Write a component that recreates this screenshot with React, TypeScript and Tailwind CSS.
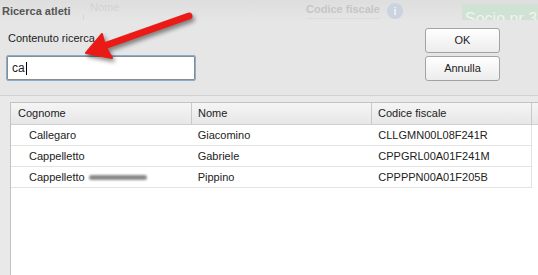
import React from 'react';

const rows = [
  { cognome: 'Callegaro', nome: 'Giacomino', cf: 'CLLGMN00L08F241R', smudge: false },
  { cognome: 'Cappelletto', nome: 'Gabriele', cf: 'CPPGRL00A01F241M', smudge: false },
  { cognome: 'Cappelletto', nome: 'Pippino', cf: 'CPPPPN00A01F205B', smudge: true },
];

const Arrow: React.FC = () => (
  <svg
    className="pointer-events-none absolute left-0 top-0 drop-shadow-[2px_3px_2px_rgba(0,0,0,0.45)]"
    width={538}
    height={275}
    viewBox="0 0 538 275"
  >
    <line x1={104} y1={46} x2={189} y2={16} stroke="#ea1b17" strokeWidth={7} strokeLinecap="round" />
    <polygon points="86,53 102,34 105,46 112,58" fill="#ea1b17" stroke="#ea1b17" strokeWidth={2} strokeLinejoin="round" />
  </svg>
);

export default function App() {
  return (
    <div className="relative flex h-[275px] w-[538px] flex-col overflow-hidden bg-[#e6e6e6] font-['Liberation_Sans',Arial,sans-serif] text-[11px] text-[#222]">
      {/* title strip with the page behind showing through */}
      <div className="flex h-[22px] shrink-0 items-start bg-gradient-to-b from-[#dedede] to-[#e6e6e6]">
        <div className="w-[88px] pl-[2px] pt-[5px] font-bold leading-[13px] text-[#555]">Ricerca atleti</div>
        <div className="flex w-[218px] flex-col pt-[1px] leading-[13px] text-[#d2d2d2]">
          <span className="pl-[2px]">Nome</span>
          <span className="-ml-[5px] h-[6px] w-[1px] bg-[#d6d6d6]" />
        </div>
        <div className="flex w-[156px] items-start gap-[7px] pt-[3px]">
          <span className="border-b border-[#dcdcdc] pb-[2px] font-bold leading-[13px] text-[#c6c6c6]">Codice fiscale</span>
          <span className="flex h-[16px] w-[16px] items-center justify-center rounded-full bg-[#cad3df] text-[11px] font-bold leading-none text-[#eef2f7]">i</span>
        </div>
        <div className="mt-[4px] h-[16px] flex-1 overflow-hidden bg-[#cfe2d3] pl-[3px] pt-[6px] text-[16px] leading-[18px] whitespace-nowrap text-[#eef5ef]">
          Socio nr 3/3
        </div>
      </div>

      {/* search form */}
      <div className="flex h-[73px] shrink-0 justify-between pr-[38px]">
        <div className="pl-[6px] pt-[10px]">
          <div className="pl-[2px] leading-[13px]">Contenuto ricerca</div>
          <div className="mt-[10px] flex h-[26px] w-[190px] items-center rounded-[2px] border border-[#85add2] bg-white pl-[5px] text-[12px] shadow-[inset_0_0_0_1px_#8c8c8c]">
            <span>ca</span>
            <span className="ml-[1px] h-[13px] w-[1px] bg-black" />
          </div>
        </div>
        <div className="flex flex-col gap-[3px] pt-[6px]">
          <button className="h-[25px] w-[75px] rounded-[3px] border border-[#a3a3a3] bg-gradient-to-b from-white to-[#ececec] text-[11px] text-[#222]">
            OK
          </button>
          <button className="h-[25px] w-[75px] rounded-[3px] border border-[#a3a3a3] bg-gradient-to-b from-white to-[#ececec] text-[11px] text-[#222]">
            Annulla
          </button>
        </div>
      </div>

      {/* results */}
      <div className="flex flex-1 flex-col border-t border-[#d2d2d2] bg-[#e9e9e9] pl-[10px] pt-[6px]">
        <div className="flex-1 border-l border-t border-[#c2c2c2] bg-white">
          <div className="flex h-[22px] border-b border-[#cfcfcf] bg-gradient-to-b from-[#f5f5f5] to-[#e7e7e7] leading-[21px]">
            <div className="w-[181px] border-r border-[#c9c9c9] pl-[7px]">Cognome</div>
            <div className="w-[180px] border-r border-[#c9c9c9] pl-[6px]">Nome</div>
            <div className="w-[160px] border-r border-[#c9c9c9] pl-[6px]">Codice fiscale</div>
            <div className="flex-1" />
          </div>
          {rows.map((r, i) => (
            <div key={i} className="flex h-[21px] w-[521px] items-center border-b border-r border-[#e3e3e3]">
              <div className="flex w-[181px] items-center pl-[18px]">
                {r.cognome}
                {r.smudge && (
                  <span className="ml-[4px] inline-block h-[5px] w-[58px] rounded-full bg-[#8a8a8a] blur-[1px]" />
                )}
              </div>
              <div className="w-[180px] pl-[6px]">{r.nome}</div>
              <div className="w-[160px] pl-[7px]">{r.cf}</div>
            </div>
          ))}
        </div>
      </div>

      <Arrow />
    </div>
  );
}
